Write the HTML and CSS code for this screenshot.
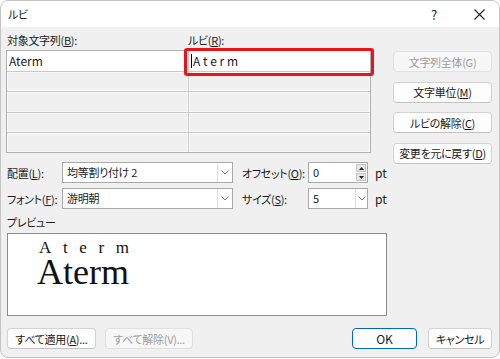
FILE: index.html
```html
<!DOCTYPE html>
<html lang="ja">
<head>
  <meta charset="UTF-8">
  <title>ルビ</title>
  <link rel="stylesheet" href="styles.css">
</head>
<body>

<div class="window">
  <div class="titlebar">
    <span class="title">ルビ</span>
    <span class="help">?</span>
    <span class="close">
      <svg width="11" height="11" viewBox="0 0 11 11"><path d="M0.5 0.5 L10.5 10.5 M10.5 0.5 L0.5 10.5" stroke="#222" stroke-width="1.1" fill="none"/></svg>
    </span>
  </div>

  <div class="content">
    <div class="top">
      <div class="left">
        <div class="labels">
          <span>対象文字列(<u>B</u>):</span>
          <span>ルビ(<u>R</u>):</span>
        </div>
        <!-- 対象文字列とルビの一覧 -->
        <div class="pairs">
          <div class="cell active">Aterm</div>
          <div class="cell active ruby-cell"><span class="caret"></span>A t e r m</div>
          <div class="cell"></div><div class="cell"></div>
          <div class="cell"></div><div class="cell"></div>
          <div class="cell"></div><div class="cell"></div>
          <div class="cell"></div><div class="cell"></div>
        </div>
      </div>

      <div class="side">
        <button class="btn" disabled>文字列全体(G)</button>
        <button class="btn">文字単位(<u>M</u>)</button>
        <button class="btn">ルビの解除(<u>C</u>)</button>
        <button class="btn">変更を元に戻す(<u>D</u>)</button>
      </div>
    </div>

    <div class="options">
      <span>配置(<u>L</u>):</span>
      <div class="combo">
        <span class="combo-text">均等割り付け 2</span>
        <span class="combo-btn"><svg width="8" height="5" viewBox="0 0 8 5"><path d="M0.5 0.5 L4 4 L7.5 0.5" stroke="#777" fill="none"/></svg></span>
      </div>
      <span class="opt-label">オフセット(<u>O</u>):</span>
      <div class="combo spin">
        <span class="combo-text">0</span>
        <span class="spin-btns">
          <span class="spin-btn"><svg width="5" height="3" viewBox="0 0 5 3"><path d="M0 3 L2.5 0 L5 3 Z" fill="#222"/></svg></span>
          <span class="spin-btn"><svg width="5" height="3" viewBox="0 0 5 3"><path d="M0 0 L2.5 3 L5 0 Z" fill="#222"/></svg></span>
        </span>
      </div>
      <span class="unit">pt</span>

      <span>フォント(<u>F</u>):</span>
      <div class="combo">
        <span class="combo-text">游明朝</span>
        <span class="combo-btn"><svg width="8" height="5" viewBox="0 0 8 5"><path d="M0.5 0.5 L4 4 L7.5 0.5" stroke="#777" fill="none"/></svg></span>
      </div>
      <span class="opt-label">サイズ(<u>S</u>):</span>
      <div class="combo size">
        <span class="combo-text">5</span>
        <span class="combo-btn"><svg width="8" height="5" viewBox="0 0 8 5"><path d="M0.5 0.5 L4 4 L7.5 0.5" stroke="#777" fill="none"/></svg></span>
      </div>
      <span class="unit">pt</span>
    </div>

    <div class="preview-label">プレビュー</div>
    <div class="preview">
      <div class="word">
        <div class="ruby"><span>A</span><span>t</span><span>e</span><span>r</span><span>m</span></div>
        <div class="base">Aterm</div>
      </div>
    </div>

    <div class="footer">
      <button class="btn apply">すべて適用(<u>A</u>)...</button>
      <button class="btn clear" disabled>すべて解除(V)...</button>
      <button class="btn ok">OK</button>
      <button class="btn cancel">キャンセル</button>
    </div>
  </div>
</div>

</body>
</html>
```

FILE: styles.css
```css
body {
  margin: 0;
  background: #fff;
}

.window {
  box-sizing: border-box;
  width: 500px;
  height: 358px;
  border: 1px solid #c4c4c4;
  border-radius: 8px;
  background: #f0f0f0;
  overflow: hidden;
  font-family: "Noto Sans CJK JP", sans-serif;
  font-size: 11px;
  letter-spacing: -0.3px;
  font-feature-settings: "palt";
  white-space: nowrap;
  color: #1a1a1a;
}

.titlebar {
  height: 26px;
  background: #fff;
  display: flex;
  align-items: center;
  padding-left: 7px;
}

.title {
  flex: 1;
}

.help {
  font-size: 13px;
  width: 12px;
  margin-right: 31px;
}

.close {
  display: flex;
  margin-right: 14px;
}

.content {
  padding: 0 7px 0 5px;
}

/* сетка и кнопки справа; кнопки могут выходить ниже сетки */
.top {
  display: flex;
  height: 126px;
}

.left {
  width: 365px;
}

.labels {
  box-sizing: border-box;
  height: 23px;
  padding: 5px 0 0 1px;
  line-height: 16px;
  display: grid;
  grid-template-columns: 181px 1fr;
}

.pairs {
  box-sizing: border-box;
  height: 103px;
  display: grid;
  grid-template-columns: 181px 181px;
  grid-template-rows: repeat(5, 1fr);
  gap: 1px;
  background: #c9c9c9;
  border: 1px solid #b0b0b0;
}

.cell {
  background: #f0f0f0;
  box-shadow: inset 0 0 0 1px #fafafa;
}

.cell.active {
  background: #fff;
  box-shadow: none;
  padding-left: 2px;
  line-height: 20px;
  font-size: 12px;
  letter-spacing: 0;
}

.ruby-cell {
  position: relative;
  letter-spacing: 1px;
}

.ruby-cell::after {
  content: '';
  position: absolute;
  left: -5px;
  top: -3px;
  right: -4px;
  bottom: -5px;
  border: 3px solid #e8141b;
  border-radius: 3px;
}

.caret {
  display: inline-block;
  width: 1px;
  height: 14px;
  background: #000;
  vertical-align: -2px;
  margin-right: 1px;
}

.side {
  margin-left: auto;
  width: 99px;
  padding-top: 24px;
  display: flex;
  flex-direction: column;
  gap: 9.5px;
}

.btn {
  box-sizing: border-box;
  flex: none;
  height: 21px;
  padding: 0;
  border: 1px solid #d3d3d3;
  border-bottom-color: #c2c2c2;
  border-radius: 4px;
  background: #fdfdfd;
  font: inherit;
  letter-spacing: inherit;
  font-feature-settings: "palt";
  white-space: nowrap;
  color: #1a1a1a;
  display: flex;
  align-items: center;
  justify-content: center;
}

.btn:disabled {
  color: #9d9d9d;
  background: #f7f7f7;
  border-color: #e0e0e0;
}

.options {
  margin-top: 9px;
  padding-left: 1px;
  display: grid;
  grid-template-columns: 55px 171px 75px 60px 1fr;
  grid-auto-rows: 21px;
  row-gap: 5px;
  align-items: center;
}

.opt-label {
  padding-left: 9px;
}

.unit {
  padding-left: 7px;
  font-size: 12px;
  letter-spacing: 0;
}

.combo {
  box-sizing: border-box;
  height: 21px;
  display: flex;
  border: 1px solid #a9a9a9;
  background: #fff;
}

.combo-text {
  flex: 1;
  padding-left: 4px;
  line-height: 19px;
}

.combo-btn {
  width: 14px;
  border-left: 1px solid #dcdcdc;
  display: flex;
  align-items: center;
  justify-content: center;
}

.size .combo-btn {
  width: 11px;
}

.spin-btns {
  width: 10px;
  display: flex;
  flex-direction: column;
  gap: 1px;
  padding: 1px 1px 1px 0;
}

.spin-btn {
  flex: 1;
  background: #e6e6e6;
  border: 1px solid #c4c4c4;
  display: flex;
  align-items: center;
  justify-content: center;
}

.preview-label {
  margin-top: 5px;
  padding-left: 1px;
  line-height: 16px;
}

.preview {
  box-sizing: border-box;
  margin-top: 3px;
  width: 380px;
  height: 83px;
  margin-left: 1px;
  border: 1px solid #8c8c8c;
  background: #fff;
  padding: 5px 0 0 29px;
}

.word {
  display: inline-block;
  font-family: "Liberation Serif", serif;
  letter-spacing: 0;
  color: #111;
}

.ruby {
  display: flex;
  justify-content: space-between;
  padding-left: 2px;
  font-size: 17px;
  line-height: 17px;
}

.base {
  font-size: 36px;
  line-height: 32px;
}

.footer {
  margin-top: 12px;
  padding-left: 1px;
  display: flex;
}

.apply {
  width: 89px;
}

.clear {
  width: 88px;
  margin-left: 9px;
}

.ok {
  width: 65px;
  margin-left: auto;
  border: 1px solid #0067c0;
  font-size: 12px;
  letter-spacing: 0;
}

.cancel {
  width: 64px;
  margin-left: 11px;
}
```
